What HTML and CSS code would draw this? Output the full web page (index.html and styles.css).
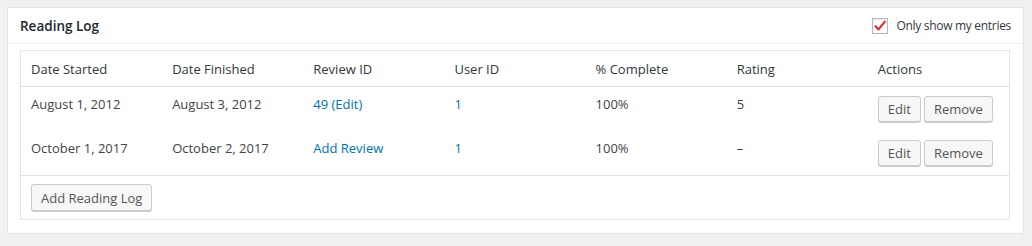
FILE: index.html
```html
<!DOCTYPE html>
<html lang="en">
<head>
  <meta charset="UTF-8">
  <title>Reading Log</title>
  <link rel="stylesheet" href="styles.css">
</head>
<body>
  <div class="postbox">
    <div class="postbox-head">
      <h2>Reading Log</h2>
      <label class="only-mine">
        <span class="check">
          <svg width="12" height="12" viewBox="0 0 12 12"><path d="M1.5 6.2 L4.6 9.4 L10.8 1.6" fill="none" stroke="#dc3232" stroke-width="2.2" stroke-linecap="round" stroke-linejoin="round"/></svg>
        </span>
        Only show my entries
      </label>
    </div>
    <div class="inside">
      <div class="log-box">
        <table class="log-table">
          <thead>
            <tr>
              <th>Date Started</th>
              <th>Date Finished</th>
              <th>Review ID</th>
              <th>User ID</th>
              <th>% Complete</th>
              <th>Rating</th>
              <th>Actions</th>
            </tr>
          </thead>
          <tbody>
            <tr>
              <td>August 1, 2012</td>
              <td>August 3, 2012</td>
              <td><a href="#">49 (Edit)</a></td>
              <td><a href="#">1</a></td>
              <td>100%</td>
              <td>5</td>
              <td class="actions"><div class="btn-row"><button class="button">Edit</button><button class="button">Remove</button></div></td>
            </tr>
            <tr>
              <td>October 1, 2017</td>
              <td>October 2, 2017</td>
              <td><a href="#">Add Review</a></td>
              <td><a href="#">1</a></td>
              <td>100%</td>
              <td>&ndash;</td>
              <td class="actions"><div class="btn-row"><button class="button">Edit</button><button class="button">Remove</button></div></td>
            </tr>
          </tbody>
        </table>
        <div class="log-foot">
          <button class="button">Add Reading Log</button>
        </div>
      </div>
    </div>
  </div>
</body>
</html>
```

FILE: styles.css
```css
body { margin: 0; background: #f1f1f1; font-family: "Open Sans", "Noto Sans", sans-serif; font-size: 13px; color: #444; }
.postbox { margin: 7px 8px 0 7px; background: #fff; border: 1px solid #e5e5e5; box-shadow: 0 1px 1px rgba(0,0,0,0.04); height: 227px; box-sizing: border-box; }
.postbox-head { display: flex; align-items: center; justify-content: space-between; height: 35px; padding: 0 12px; border-bottom: 1px solid #eee; }
.postbox-head h2 { margin: 0; font-size: 13.5px; font-weight: 600; color: #23282d; }
.only-mine { display: flex; align-items: center; gap: 8px; color: #32373c; font-size: 12px; letter-spacing: -0.3px; }
.check { display: flex; align-items: center; justify-content: center; width: 14px; height: 14px; border: 1px solid #b4b9be; background: #fff; box-shadow: inset 0 1px 2px rgba(0,0,0,0.1); }
.inside { padding: 6px 13px 0 12px; }
.log-box { border: 1px solid #e5e5e5; }
.log-table { width: 100%; table-layout: fixed; border-collapse: collapse; }
.log-table th { text-align: left; font-weight: 400; height: 35px; padding: 0 10px; border-bottom: 1px solid #e1e1e1; color: #32373c; }
.log-table td { height: 28px; padding: 8px 10px; line-height: 19px; vertical-align: top; }
.log-table a { color: #0073aa; text-decoration: none; }
.log-table td.actions { height: 35px; padding: 9px 10px 0; }
.btn-row { display: flex; gap: 3px; height: 27px; }
.button { font-family: inherit; font-size: 13px; color: #555; background: #f7f7f7; border: 1px solid #ccc; border-radius: 3px; box-shadow: 0 1px 0 #ccc; height: 26px; padding: 0 9px; cursor: pointer; vertical-align: top; }
.log-foot { border-top: 1px solid #e1e1e1; padding: 8px 10px 8px; }
.log-foot .button { display: block; height: 27px; }
```
